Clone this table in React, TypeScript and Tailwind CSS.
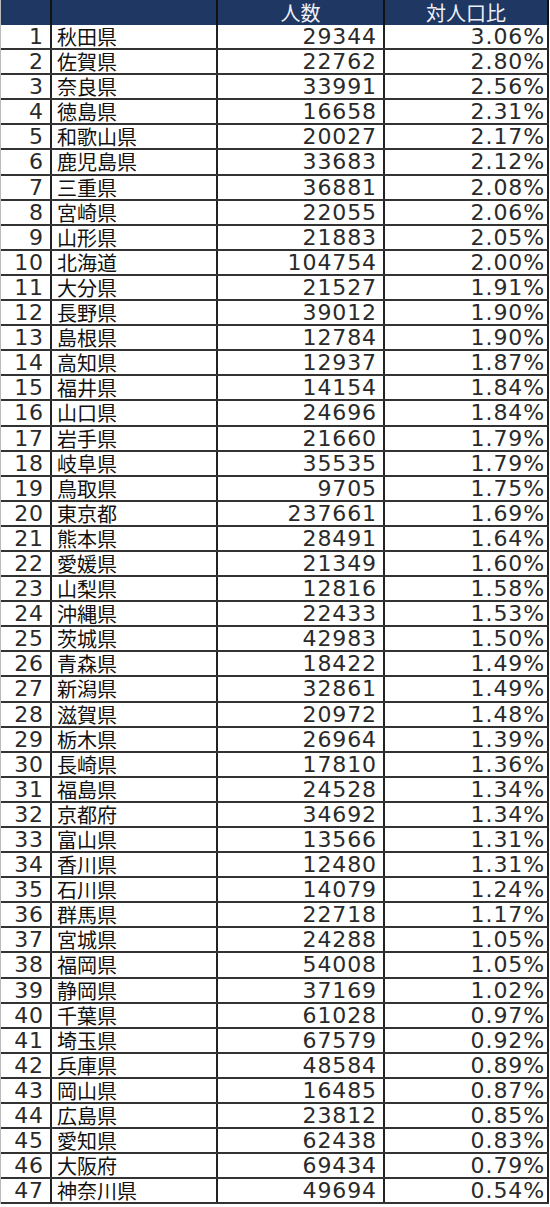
const rows: [string, number, string][] = [
  ["秋田県", 29344, "3.06%"],
  ["佐賀県", 22762, "2.80%"],
  ["奈良県", 33991, "2.56%"],
  ["徳島県", 16658, "2.31%"],
  ["和歌山県", 20027, "2.17%"],
  ["鹿児島県", 33683, "2.12%"],
  ["三重県", 36881, "2.08%"],
  ["宮崎県", 22055, "2.06%"],
  ["山形県", 21883, "2.05%"],
  ["北海道", 104754, "2.00%"],
  ["大分県", 21527, "1.91%"],
  ["長野県", 39012, "1.90%"],
  ["島根県", 12784, "1.90%"],
  ["高知県", 12937, "1.87%"],
  ["福井県", 14154, "1.84%"],
  ["山口県", 24696, "1.84%"],
  ["岩手県", 21660, "1.79%"],
  ["岐阜県", 35535, "1.79%"],
  ["鳥取県", 9705, "1.75%"],
  ["東京都", 237661, "1.69%"],
  ["熊本県", 28491, "1.64%"],
  ["愛媛県", 21349, "1.60%"],
  ["山梨県", 12816, "1.58%"],
  ["沖縄県", 22433, "1.53%"],
  ["茨城県", 42983, "1.50%"],
  ["青森県", 18422, "1.49%"],
  ["新潟県", 32861, "1.49%"],
  ["滋賀県", 20972, "1.48%"],
  ["栃木県", 26964, "1.39%"],
  ["長崎県", 17810, "1.36%"],
  ["福島県", 24528, "1.34%"],
  ["京都府", 34692, "1.34%"],
  ["富山県", 13566, "1.31%"],
  ["香川県", 12480, "1.31%"],
  ["石川県", 14079, "1.24%"],
  ["群馬県", 22718, "1.17%"],
  ["宮城県", 24288, "1.05%"],
  ["福岡県", 54008, "1.05%"],
  ["静岡県", 37169, "1.02%"],
  ["千葉県", 61028, "0.97%"],
  ["埼玉県", 67579, "0.92%"],
  ["兵庫県", 48584, "0.89%"],
  ["岡山県", 16485, "0.87%"],
  ["広島県", 23812, "0.85%"],
  ["愛知県", 62438, "0.83%"],
  ["大阪府", 69434, "0.79%"],
  ["神奈川県", 49694, "0.54%"],
];

// numbers: wide digits like the spreadsheet font
const num = "font-['DejaVu_Sans',sans-serif] text-[22px] tracking-[0.9px] text-right text-[#2a2a2a]";
const jp = "font-['Noto_Sans_CJK_JP',sans-serif] text-[20px]";

export default function App() {
  return (
    <div className="w-[550px] h-[1207px] bg-white">
      <div className="w-[549px] border-l border-[#bbb]">
        {/* header */}
        <div className={`grid grid-cols-[51px_166px_167px_164px] h-[25px] bg-[#1f3763] text-[#eef0f5] leading-[25px] ${jp}`}>
          <div className="border-r-2 border-[#111]" />
          <div className="border-r-2 border-[#111]" />
          <div className="text-center border-r-2 border-[#111]">人数</div>
          <div className="text-center border-r-2 border-[#111]">対人口比</div>
        </div>
        {rows.map(([pref, count, ratio], i) => (
          <div
            key={pref}
            className="grid grid-cols-[51px_166px_167px_164px] h-[25.1px] leading-[23px] border-b-2 border-[#333]"
          >
            <div className={`${num} border-r-2 border-[#222] pr-[6px]`}>{i + 1}</div>
            <div className={`${jp} pl-[5px] border-r-2 border-[#222] text-[#111]`}>{pref}</div>
            <div className={`${num} border-r-2 border-[#222] pr-[6px]`}>{count}</div>
            <div className={`${num} border-r-2 border-[#222] pr-[2px]`}>{ratio}</div>
          </div>
        ))}
      </div>
    </div>
  );
}
